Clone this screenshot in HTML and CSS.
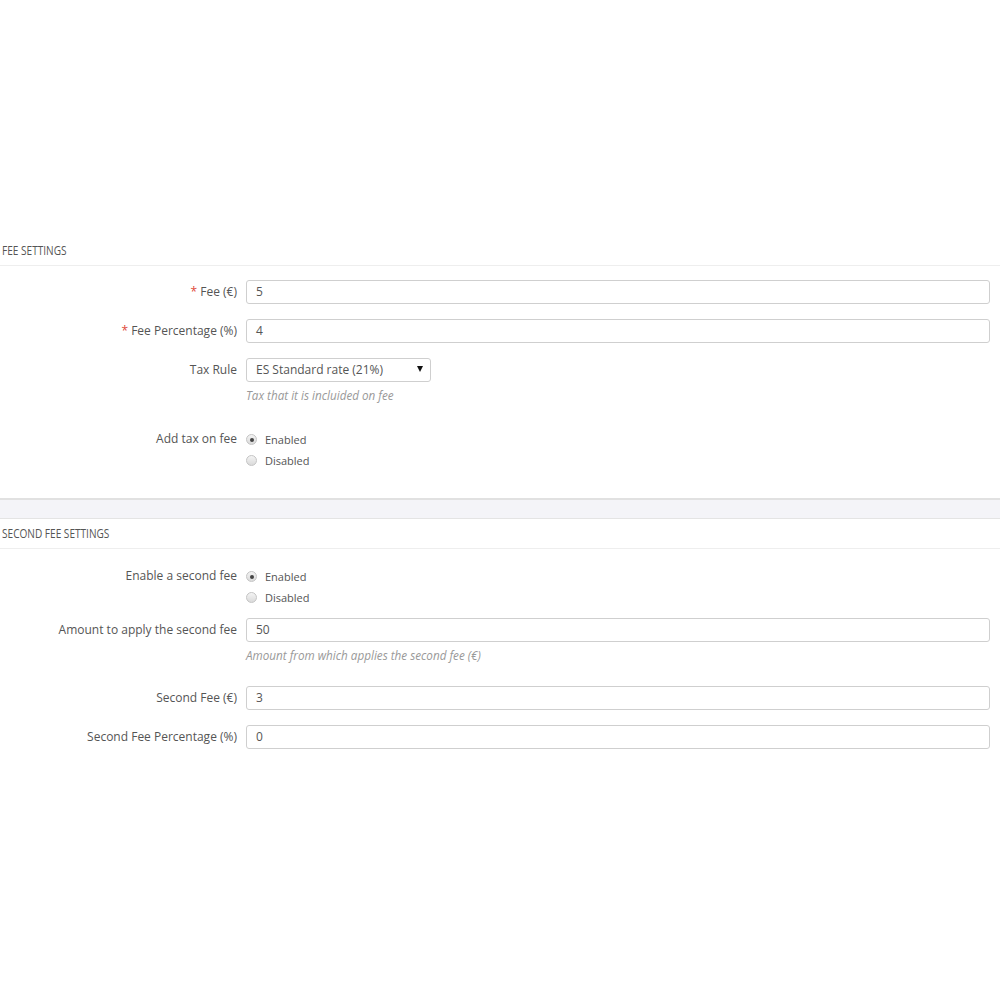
FILE: index.html
```html
<!DOCTYPE html>
<html lang="en">
<head>
    <meta charset="UTF-8">
    <title>Fee Settings</title>
    <link rel="stylesheet" href="styles.css">
</head>
<body>

    <div class="panel">
        <div class="panel-heading"><span>Fee settings</span></div>
        <div class="form-wrapper">
            <div class="form-group">
                <label class="control-label"><span class="required">*</span> Fee (€)</label>
                <div class="form-input"><div class="text-input">5</div></div>
            </div>
            <div class="form-group">
                <label class="control-label"><span class="required">*</span> Fee Percentage (%)</label>
                <div class="form-input"><div class="text-input">4</div></div>
            </div>
            <div class="form-group">
                <label class="control-label">Tax Rule</label>
                <div class="form-input">
                    <div class="select-input">
                        <span>ES Standard rate (21%)</span>
                        <svg class="caret" width="6" height="6" viewBox="0 0 6 6"><path d="M0 0H6L3 6Z" fill="#111"/></svg>
                    </div>
                    <p class="help-block">Tax that it is incluided on fee</p>
                </div>
            </div>
            <div class="form-group radio-group">
                <label class="control-label">Add tax on fee</label>
                <div class="form-input">
                    <div class="radio"><span class="radio-dot checked"></span>Enabled</div>
                    <div class="radio"><span class="radio-dot"></span>Disabled</div>
                </div>
            </div>
        </div>
    </div>

    <div class="panel-gap"></div>

    <div class="panel">
        <div class="panel-heading"><span>Second fee settings</span></div>
        <div class="form-wrapper">
            <div class="form-group radio-group">
                <label class="control-label">Enable a second fee</label>
                <div class="form-input">
                    <div class="radio"><span class="radio-dot checked"></span>Enabled</div>
                    <div class="radio"><span class="radio-dot"></span>Disabled</div>
                </div>
            </div>
            <div class="form-group">
                <label class="control-label">Amount to apply the second fee</label>
                <div class="form-input">
                    <div class="text-input">50</div>
                    <p class="help-block">Amount from which applies the second fee (€)</p>
                </div>
            </div>
            <div class="form-group">
                <label class="control-label">Second Fee (€)</label>
                <div class="form-input"><div class="text-input">3</div></div>
            </div>
            <div class="form-group">
                <label class="control-label">Second Fee Percentage (%)</label>
                <div class="form-input"><div class="text-input">0</div></div>
            </div>
        </div>
    </div>

</body>
</html>
```

FILE: styles.css
```css
body {
    margin: 0;
    padding-top: 236px;
    background: #fff;
    font-family: "Open Sans", "Liberation Sans", sans-serif;
    font-size: 12px;
    color: #555;
}

.panel {
    background: #fff;
}

.panel-heading {
    height: 29px;
    line-height: 29px;
    padding-left: 2px;
    border-bottom: 1px solid #eee;
    font-family: "Open Sans", "Liberation Sans", sans-serif;
    font-size: 12px;
    text-transform: uppercase;
    color: #555;
}

/* titulo estrecho como la fuente condensada del original */
.panel-heading span {
    display: inline-block;
    transform: scaleX(0.84);
    transform-origin: left center;
}

.form-wrapper {
    padding: 14px 10px 28px 0;
}

.panel + .panel-gap {
    border-top: 2px solid #e1e1e1;
}

.panel-gap {
    height: 18px;
    background: #f4f4f8;
    border-bottom: 1px solid #e4e4e4;
}

.form-group {
    display: grid;
    grid-template-columns: 237px 1fr;
    column-gap: 9px;
    margin-bottom: 15px;
}

.form-group:last-child {
    margin-bottom: 0;
}

.control-label {
    text-align: right;
    line-height: 24px;
    color: #555;
}

.radio-group .control-label {
    line-height: 20px;
}

.required {
    color: #e0483a;
}

.text-input,
.select-input {
    box-sizing: border-box;
    height: 24px;
    line-height: 22px;
    padding: 0 8px 0 9px;
    border: 1px solid #cfcfcf;
    border-radius: 3px;
    background: #fff;
    color: #555;
}

.select-input {
    width: 185px;
    display: flex;
    justify-content: space-between;
    align-items: center;
}

.caret {
    margin-right: -1px;
    margin-top: -3px;
}

.help-block {
    margin: 4px 0 7px;
    line-height: 18px;
    font-style: italic;
    font-size: 11.7px;
    color: #999;
}

.radio-group {
    padding-top: 3px;
    margin-bottom: 11px;
}

.radio {
    display: flex;
    align-items: center;
    height: 20px;
    font-size: 11px;
    color: #555;
}

.radio:first-child {
    height: 21px;
}

.radio-dot {
    box-sizing: border-box;
    width: 11px;
    height: 11px;
    margin-right: 8px;
    border: 1px solid #c4c4c4;
    border-radius: 50%;
    background: linear-gradient(#f4f4f4, #dadada);
    display: flex;
    align-items: center;
    justify-content: center;
}

.radio-dot.checked::after {
    content: "";
    width: 4px;
    height: 4px;
    border-radius: 50%;
    background: #444;
}
```
